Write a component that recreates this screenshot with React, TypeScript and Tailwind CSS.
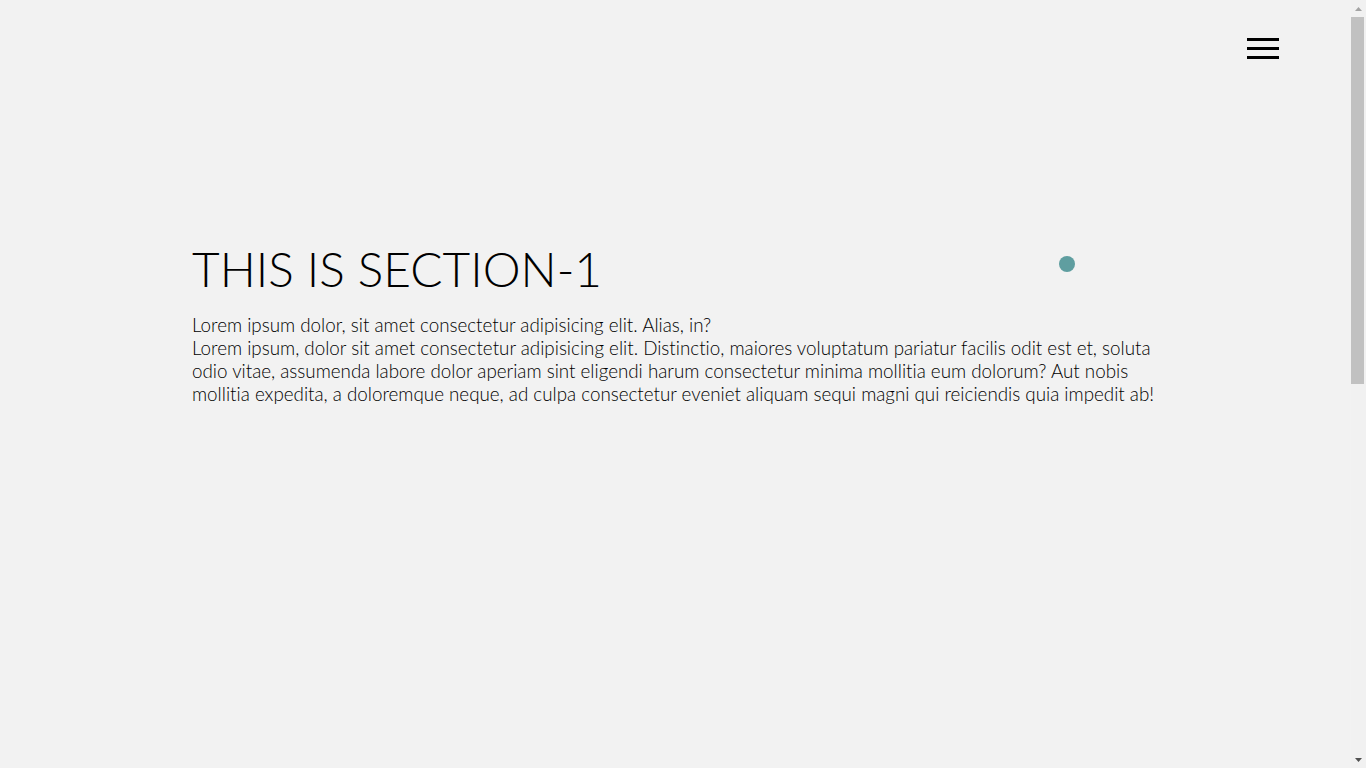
import React from "react";

function FakeScrollbar() {
  return (
    <div className="flex h-screen w-[15px] shrink-0 flex-col bg-[#f1f1f1]">
      <div className="flex h-[17px] items-center justify-center">
        <svg width="7" height="4" viewBox="0 0 7 4"><polygon points="3.5,0 7,4 0,4" fill="#a3a3a3" /></svg>
      </div>
      <div className="ml-0 mr-[2px] h-[367px] bg-[#c1c1c1]" />
      <div className="flex-1" />
      <div className="flex h-[17px] items-center justify-center">
        <svg width="7" height="4" viewBox="0 0 7 4"><polygon points="0,0 7,0 3.5,4" fill="#505050" /></svg>
      </div>
    </div>
  );
}

export default function App() {
  return (
    <div
      className="flex h-screen overflow-hidden bg-[#f2f2f2] text-black [font-variant-ligatures:none]"
      style={{ fontFamily: "Lato, 'Noto Sans', sans-serif" }}
    >
      <main className="relative h-screen flex-1">
        <header className="absolute top-0 right-0 flex justify-end pr-[72px] pt-[38px]">
          <button className="flex w-8 flex-col gap-[6px]" aria-label="menu">
            <span className="block h-[3px] w-8 bg-black" />
            <span className="block h-[3px] w-8 bg-black" />
            <span className="block h-[3px] w-8 bg-black" />
          </button>
        </header>
        <section className="relative h-screen px-[192px] pt-[240px]">
          <span className="absolute left-[1059px] top-[256px] h-4 w-4 rounded-full bg-[#5f9ea0]" />
          <h1 className="text-[47.8px] font-light leading-[1.2]">THIS IS SECTION-1</h1>
          <p className="mt-[16px] text-[18.8px] font-light leading-[23px] text-black">
            Lorem ipsum dolor, sit amet consectetur adipisicing elit. Alias, in?
            <br />
            Lorem ipsum, dolor sit amet consectetur adipisicing elit. Distinctio, maiores voluptatum pariatur facilis odit est et, soluta odio vitae, assumenda labore dolor aperiam sint eligendi harum consectetur minima mollitia eum dolorum? Aut nobis mollitia expedita, a doloremque neque, ad culpa consectetur eveniet aliquam sequi magni qui reiciendis quia impedit ab!
          </p>
        </section>
      </main>
      <FakeScrollbar />
    </div>
  );
}
